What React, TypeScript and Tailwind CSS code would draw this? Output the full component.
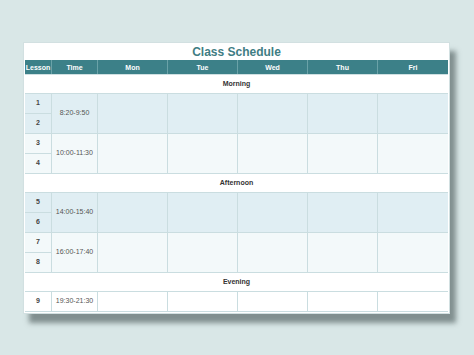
import React from "react";

const days = ["Mon", "Tue", "Wed", "Thu", "Fri"];

type Block = { kind: "section"; label: string } | { kind: "pair"; a: string; b: string; time: string; light: boolean } | { kind: "single"; n: string; time: string };

const blocks: Block[] = [
  { kind: "section", label: "Morning" },
  { kind: "pair", a: "1", b: "2", time: "8:20-9:50", light: false },
  { kind: "pair", a: "3", b: "4", time: "10:00-11:30", light: true },
  { kind: "section", label: "Afternoon" },
  { kind: "pair", a: "5", b: "6", time: "14:00-15:40", light: false },
  { kind: "pair", a: "7", b: "8", time: "16:00-17:40", light: true },
  { kind: "section", label: "Evening" },
  { kind: "single", n: "9", time: "19:30-21:30" },
];

export default function App() {
  const cols = "grid grid-cols-[26px_45px_69px_69px_69px_69px_70px] gap-px";
  return (
    <div
      className="w-[474px] h-[355px] bg-[#d9e7e7] pt-[42px] pl-[23px] overflow-hidden"
      style={{ fontFamily: '"Liberation Sans", Arial, sans-serif' }}
    >
      <div className="w-[427px] bg-white border border-[#d2e0e1] p-px shadow-[6px_9px_5px_rgba(70,85,85,0.6)]">
        <div className="h-[16px] flex items-center justify-center text-[12px] font-bold text-[#3f7d83] leading-none">
          Class Schedule
        </div>
        <div className={`${cols} bg-[#6aa2a8] border-b border-[#cfe0e2]`}>
          {["Lesson", "Time", ...days].map((h) => (
            <div key={h} className="h-[14px] bg-[#3c8088] text-white text-[7px] font-bold flex items-center justify-center leading-none">
              {h}
            </div>
          ))}
        </div>
        <div className={`${cols} bg-[#cadde0] border-b border-[#cadde0]`}>
          {blocks.map((b, i) => {
            if (b.kind === "section") {
              return (
                <div key={i} className="col-span-7 h-[18px] bg-white flex items-center justify-center text-[7px] font-bold text-[#333]">
                  {b.label}
                </div>
              );
            }
            if (b.kind === "single") {
              return (
                <React.Fragment key={i}>
                  <div className="h-[19px] bg-white flex items-center justify-center text-[7px] font-bold text-[#444]">{b.n}</div>
                  <div className="h-[19px] bg-white flex items-center justify-center text-[7px] text-[#555]">{b.time}</div>
                  {days.map((d) => (
                    <div key={d} className="h-[19px] bg-white" />
                  ))}
                </React.Fragment>
              );
            }
            const bg = b.light ? "bg-[#f3f9fa]" : "bg-[#e0eef3]";
            return (
              <React.Fragment key={i}>
                <div className={`row-span-2 grid grid-rows-[19px_19px] gap-px bg-[#cadde0]`}>
                  <div className={`${bg} flex items-center justify-center text-[7px] font-bold text-[#444]`}>{b.a}</div>
                  <div className={`${bg} flex items-center justify-center text-[7px] font-bold text-[#444]`}>{b.b}</div>
                </div>
                <div className={`row-span-2 ${bg} flex items-center justify-center text-[7px] text-[#555]`}>{b.time}</div>
                {days.map((d) => (
                  <div key={d} className={`row-span-2 ${bg}`} />
                ))}
              </React.Fragment>
            );
          })}
        </div>
      </div>
    </div>
  );
}
